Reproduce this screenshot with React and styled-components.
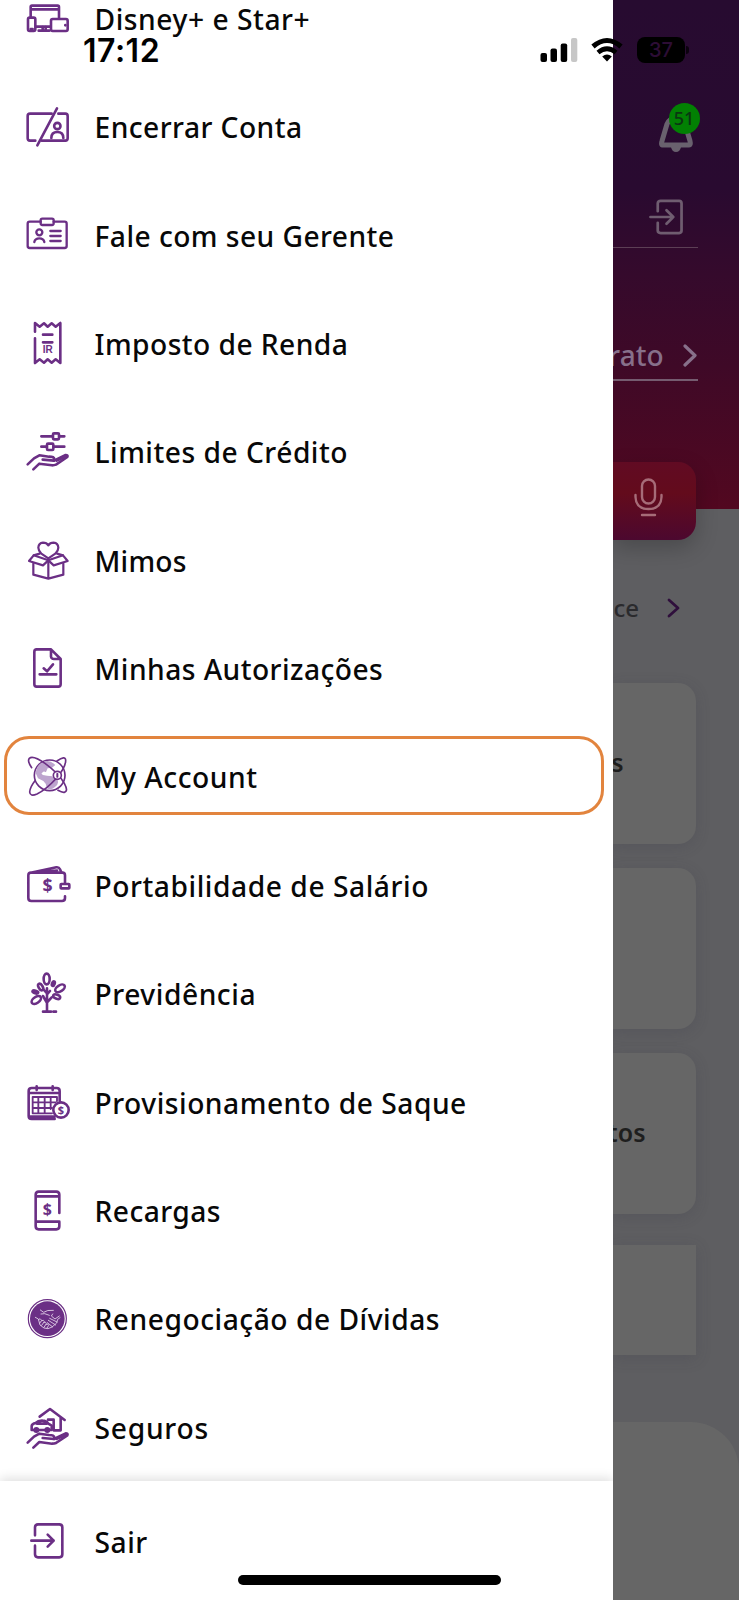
import React from 'react'
import styled, { createGlobalStyle, css } from 'styled-components'

const GlobalStyle = createGlobalStyle`
    *{
        box-sizing: border-box;
    }
    body{
        margin: 0;
        background: #5e5e61;
        font-family: "Noto Sans", "Open Sans", sans-serif;
    }
`
const Screen = styled.div`
    position: relative;
    display: grid;
    grid-template-columns: 613px 1fr;
    width: 739px;
    height: 1600px;
    overflow: hidden;
`

/* drawer */
const Drawer = styled.aside`
    display: flex;
    flex-direction: column;
    height: 1600px;
    background: #ffffff;
`
const Menu = styled.ul`
    flex: none;
    display: flex;
    flex-direction: column;
    height: 1481px;
    margin: 0;
    padding: 0;
    overflow: hidden;
    list-style: none;
`
const Item = styled.li`
    position: relative;
    flex: none;
    display: flex;
    align-items: center;
    gap: 22.5px;
    height: 108.35px;
    padding-left: 24px;
    &:first-of-type{
        margin-top: -35.1px;
    }
    ${({ $marked }) => $marked && css`
        &::after{
            content: "";
            position: absolute;
            left: 4px;
            right: 9px;
            top: 12.5px;
            height: 73px;
            border: 3px solid #e2843e;
            border-radius: 25px;
        }
    `}
`
const Label = styled.span`
    font-size: 28.2px;
    line-height: 36px;
    font-weight: 500;
    letter-spacing: ${({ $track }) => $track || 0}px;
    color: #080808;
    white-space: nowrap;
`
const Icon = styled.svg`
    flex: none;
    width: 48px;
    height: 48px;
    fill: none;
    stroke: #6b2f85;
    stroke-width: 7.8;
    stroke-linecap: round;
    stroke-linejoin: round;
    text{
        fill: #6b2f85;
        stroke: none;
        font-weight: 700;
        text-anchor: middle;
    }
`
const Footer = styled.footer`
    flex: 1;
    display: flex;
    align-items: center;
    gap: 22.5px;
    padding: 2px 0 0 24px;
    box-shadow: 0 -3px 10px rgba(0,0,0,0.12);
`

/* account page behind the drawer */
const Page = styled.main`
    display: flex;
    flex-direction: column;
    height: 1600px;
    overflow: hidden;
    background: #5e5e61;
`
const Hero = styled.header`
    flex: none;
    display: flex;
    flex-direction: column;
    height: 509px;
    background: linear-gradient(180deg, #270b30 0%, #290a30 37%, #350a2c 54%, #3f0927 72%, #520820 100%);
`
const HeroLine = styled.div`
    display: flex;
    justify-content: flex-end;
    align-items: flex-end;
    width: ${({ $w }) => $w}px;
    height: ${({ $h }) => $h}px;
    padding: 0 ${({ $right }) => $right || 0}px ${({ $bottom }) => $bottom || 0}px 0;
    border-bottom: ${({ $line }) => $line || '0 none'};
    overflow: ${({ $clip }) => ($clip ? 'hidden' : 'visible')};
`
const PageIcon = styled.svg`
    flex: none;
    fill: none;
    stroke: ${({ $color }) => $color || '#84727f'};
    stroke-linecap: round;
    stroke-linejoin: round;
`
const Bell = styled.div`
    position: relative;
    height: 38px;
`
const Badge = styled.span`
    position: absolute;
    top: -12.5px;
    left: 11px;
    width: 31px;
    height: 31px;
    border-radius: 50%;
    background: #028003;
    color: #0b3512;
    font-size: 18px;
    line-height: 31px;
    font-weight: 500;
    text-align: center;
`
const Statement = styled.span`
    margin-right: 19px;
    font-size: 28px;
    line-height: 36px;
    font-weight: 500;
    color: #87708a;
`
const Voice = styled.div`
    position: relative;
    flex: none;
    width: 82.5px;
    height: 78px;
    margin-top: -47px;
    padding: 16px 0 0 21px;
    border-radius: 0 18px 18px 0;
    background: linear-gradient(180deg, #610b23 0%, #630b1c 40%, #4c082f 100%);
    box-shadow: 0 8px 22px rgba(0,0,0,0.22);
`
const Shortcut = styled.div`
    flex: none;
    display: flex;
    align-items: center;
    justify-content: flex-end;
    gap: 28px;
    width: 67px;
    height: 40px;
    margin: 48px 0 55px;
    font-size: 24px;
    line-height: 30px;
    font-weight: 500;
    color: #2a2a2d;
`
const Card = styled.div`
    flex: none;
    display: flex;
    align-items: center;
    justify-content: flex-end;
    width: 82.5px;
    height: ${({ $h }) => $h}px;
    margin-bottom: ${({ $gap }) => $gap}px;
    padding: 0 ${({ $right }) => $right || 0}px 3px 0;
    border-radius: ${({ $square }) => ($square ? '0' : '0 18px 18px 0')};
    background: #666666;
    box-shadow: 0 3px 14px rgba(60,60,72,0.22);
    color: #1e1e1e;
    font-size: 25px;
    font-weight: 600;
    overflow: hidden;
`
const Sheet = styled.div`
    flex: 1;
    border-radius: 0 48px 0 0;
    background: #666666;
`

/* phone chrome, drawn over everything */
const StatusBar = styled.div`
    position: absolute;
    top: 33.5px;
    left: 83px;
    right: 50px;
    display: flex;
    align-items: center;
    height: 32px;
    font-family: Inter, sans-serif;
`
const Time = styled.time`
    flex: 1;
    padding-top: 2px;
    font-size: 32px;
    line-height: 32px;
    font-weight: 600;
    letter-spacing: 0.5px;
    color: #000000;
`
const Battery = styled.div`
    width: 48px;
    height: 26px;
    margin-left: 14px;
    border-radius: 8px;
    background: #000000;
    color: #2c0d35;
    font-size: 20px;
    line-height: 26px;
    font-weight: 500;
    text-align: center;
`
const BatteryTip = styled.span`
    width: 3px;
    height: 8px;
    margin-left: 1px;
    border-radius: 0 4px 4px 0;
    background: #0b020e;
`
const HomeBar = styled.div`
    position: absolute;
    left: 238px;
    bottom: 15.5px;
    width: 263px;
    height: 9.5px;
    border-radius: 5px;
    background: #000000;
`

const Hand = ({ y = 0 }) => (
    <g transform={`translate(0 ${y})`}>
        <path d="M11 109 L30 91 L46 82 L75 86 Q90 86 91 93 L90 98 L56 95" />
        <path d="M90 98 L125 81 Q133 81 130 87 L96 110 Q91 112 84 112 L46 107 L28 124" />
        <path d="M98 97 L124 86" strokeWidth="9" />
    </g>
)

const icons = {
    devices: (
        <>
            <path d="M20 66 V36 Q20 32 24 32 H101 Q105 32 105 36 V68 M21 43 H104 M37 95 H78" />
            <rect x="12" y="68" width="22" height="40" rx="5" />
            <rect x="81" y="72" width="50" height="36" rx="5" />
            <path d="M44 107 H76 M56 96 V106 M65 96 V106 M20 102 H26" />
            <path d="M124 90 V91" />
        </>
    ),
    closeAccount: (
        <>
            <path d="M83 32 H18 Q11 32 11 39 V106 Q11 113 18 113 H34 M53 113 H124 Q131 113 131 106 V39 Q131 32 124 32 H103" />
            <path d="M99 16 L40 127" />
            <circle cx="100" cy="69" r="9.5" />
            <path d="M82 105 Q82 87 100 87 Q118 87 118 105" />
        </>
    ),
    manager: (
        <g strokeWidth="7">
            <path d="M50 29 H17 Q11 29 11 35 V102 Q11 108 17 108 H122 Q128 108 128 102 V35 Q128 29 122 29 H89" />
            <rect x="50" y="20" width="39" height="19" rx="5" />
            <circle cx="46" cy="61" r="9" />
            <path d="M31 90 Q33 79 46 79 Q59 79 61 90 M79 57 H110 M79 72 H110 M79 87 H110" />
        </g>
    ),
    tax: (
        <>
            <path d="M33 35 V9 L47 20 L60 10 L71 20 L83 10 L95 20 L109 9 V129 L95 118 L83 128 L71 118 L60 128 L47 118 L33 129 V55" />
            <path d="M57 44 H85 M57 67 H85" />
            <text x="71" y="99" fontSize="30" style={{ fontFamily: 'Liberation Sans' }}>IR</text>
        </>
    ),
    limits: (
        <>
            <path d="M52 25 H86 M106 25 H121 M52 56 H68 M89 56 H121" />
            <rect x="87" y="16" width="18" height="18" rx="3" />
            <rect x="69" y="47" width="19" height="19" rx="3" />
            <Hand />
        </>
    ),
    gifts: (
        <g strokeWidth="6.6">
            <path d="M52 50 Q43 40 43 32 Q44 18 57 17 Q68 17 73 25 Q78 17 89 17 Q102 18 103 32 Q103 41 94 50 L73 64 Z" />
            <path d="M47 50 L29 55 L15 72 L57 85 L73 70 L89 85 L131 72 L117 55 L99 50" />
            <path d="M29 55 L73 70 L117 55" />
            <path d="M28 80 V113 L73 125 L118 113 V80 M73 71 V124" />
        </g>
    ),
    permits: (
        <>
            <path d="M80 13 H38 Q31 13 31 20 V118 Q31 125 38 125 H103 Q110 125 110 118 V42 L81 13 V35 Q82 42 90 42 H108" />
            <path d="M59 70 L69 79 L87 58 M47 88 H97" />
        </>
    ),
    account: (
        <g strokeWidth="5">
            <circle cx="77" cy="67" r="46" />
            <path d="M35 60 Q37 34 60 26 Q78 20 94 36 L84 44 L71 46 L66 57 L54 59 L56 66 L84 70 L99 80 Q108 90 92 103 Q80 113 69 106 L65 92 L58 84 L42 76 Z" fill="#bda4ce" stroke="none" />
            <path d="M52 62 L60 55 L68 61 L82 60 L80 68 L60 66 Z" fill="#ffffff" stroke="none" />
            <path d="M23 44 Q9 24 16 16 Q27 6 63 31 Q104 61 121 91 Q134 115 121 118 Q114 119 102 112" />
            <path d="M99 24 Q124 7 125 21 Q126 43 95 78 Q66 110 39 123 Q18 132 17 117 Q18 102 33 83" />
            <circle cx="100" cy="67" r="12" fill="#ffffff" />
            <rect x="97" y="60" width="6" height="14" rx="2" fill="#6b2f85" stroke="none" />
        </g>
    ),
    wallet: (
        <>
            <path d="M123 62 V40 Q123 32 115 32 H21 Q13 32 13 40 V108 Q13 117 22 117 H114 Q123 117 123 108 V103" />
            <path d="M27 31 L97 16 Q105 15 108 22 L112 31 M47 30 L99 26" />
            <rect x="110" y="66" width="26" height="13" rx="2" />
            <text x="71" y="91" fontSize="53">$</text>
        </>
    ),
    pension: (
        <>
            <path d="M69 55 V123 M57 125 H81 M88 125 H96 M68 97 L57 78 M70 96 L83 82 M69 70 L60 60 M69 73 L78 63" />
            <ellipse cx="68" cy="27" rx="9" ry="16" />
            <ellipse cx="108" cy="55" rx="16" ry="9" transform="rotate(-32 108 55)" />
            <ellipse cx="88" cy="41" rx="4" ry="7" transform="rotate(20 88 41)" fill="#6b2f85" />
            <ellipse cx="50" cy="51" rx="6" ry="11" transform="rotate(-30 50 51)" />
            <ellipse cx="34" cy="66" rx="9" ry="4" transform="rotate(15 34 66)" fill="#6b2f85" />
            <ellipse cx="37" cy="90" rx="16" ry="9" transform="rotate(-35 37 90)" />
            <ellipse cx="98" cy="80" rx="11" ry="6" transform="rotate(22 98 80)" />
        </>
    ),
    calendar: (
        <>
            <path d="M107 65 V36 Q107 27 98 27 H23 Q14 27 14 36 V111 Q14 120 23 120 H92 M15 42 H106 M38 22 V33 M86 22 V33" />
            <path d="M19 114 H90" strokeWidth="11" />
            <path d="M26 54 V103 H84 M26 54 H99 V66 M43 54 V102 M62 54 V102 M80 54 V90 M26 70 H95 M26 87 H84" strokeWidth="5.5" />
            <circle cx="111" cy="93" r="23" fill="#ffffff" />
            <text x="111" y="105" fontSize="33">$</text>
        </>
    ),
    topUp: (
        <>
            <path d="M106 78 V23 Q106 14 97 14 H44 Q35 14 35 23 V118 Q35 127 44 127 H97 Q106 127 106 118 V104 H36 M36 28 H105" />
            <text x="70" y="85" fontSize="48">$</text>
        </>
    ),
    deal: (
        <>
            <circle cx="70" cy="71" r="57" strokeWidth="3.5" />
            <circle cx="70" cy="71" r="52" fill="#6b2f85" stroke="none" />
            <g stroke="#dbc9e3" strokeWidth="2.8">
                <path d="M49 45 L59 52 Q69 44 88 46 M51 57 L62 56 L76 61 M86 57 L82 63 L93 72 L106 63" />
                <path d="M34 67 L43 72 L48 90 L60 99 L72 101 L84 96 L98 84 L101 73 L108 68" />
                <path d="M43 74 Q49 67 53 76 L47 85 M53 77 Q59 73 61 80 L53 91 M60 82 Q66 79 67 86 L60 97 M67 88 Q73 85 74 91 L69 99" />
                <path d="M73 76 L95 90 M70 83 L86 96 M77 70 L99 81" />
            </g>
        </>
    ),
    insurance: (
        <>
            <path d="M47 38 L78 15 L122 48 M110 42 V79 H89 V47 H72" />
            <path d="M23 78 V66 Q24 59 35 57 Q43 49 56 50 Q67 50 73 59 L83 65 V78 H23 Z M39 59 H68" />
            <circle cx="37" cy="78" r="5" fill="#6b2f85" />
            <circle cx="70" cy="78" r="5" fill="#6b2f85" />
            <Hand y={7} />
        </>
    ),
    exit: (
        <>
            <path d="M33 52 V28 Q33 19 42 19 H106 Q115 19 115 28 V109 Q115 118 106 118 H42 Q33 118 33 109 V83" />
            <path d="M22 68 H89 M71 50 L89 68 L71 86" />
        </>
    ),
}

const items = [
    { icon: 'devices', text: 'Disney+ e Star+', track: 0.55 },
    { icon: 'closeAccount', text: 'Encerrar Conta', track: 0.45 },
    { icon: 'manager', text: 'Fale com seu Gerente', track: 0.45 },
    { icon: 'tax', text: 'Imposto de Renda', track: 0.45 },
    { icon: 'limits', text: 'Limites de Crédito', track: 0.5 },
    { icon: 'gifts', text: 'Mimos', track: 0.2 },
    { icon: 'permits', text: 'Minhas Autorizações', track: 0.45 },
    { icon: 'account', text: 'My Account', track: 0.55, marked: true },
    { icon: 'wallet', text: 'Portabilidade de Salário', track: 0.55 },
    { icon: 'pension', text: 'Previdência', track: 0.55 },
    { icon: 'calendar', text: 'Provisionamento de Saque', track: 0.52 },
    { icon: 'topUp', text: 'Recargas', track: 0.45 },
    { icon: 'deal', text: 'Renegociação de Dívidas', track: 0.52 },
    { icon: 'insurance', text: 'Seguros', track: 0.75 },
]

const SideMenu = () => {
    return (
        <Drawer>
            <Menu>
                {items.map(({ icon, text, track, marked }) => (
                    <Item key={icon} $marked={marked}>
                        <Icon viewBox="0 0 144 144">{icons[icon]}</Icon>
                        <Label $track={track}>{text}</Label>
                    </Item>
                ))}
            </Menu>
            <Footer>
                <Icon viewBox="0 0 144 144">{icons.exit}</Icon>
                <Label $track={0.5}>Sair</Label>
            </Footer>
        </Drawer>
    )
}

const AccountPage = () => {
    return (
        <Page>
            <Hero>
                <HeroLine $w={80.5} $h={153}>
                    <Bell>
                        <PageIcon width="36" height="38" viewBox="0 0 36 38" strokeWidth="5" $color="#69616e">
                            <path d="M4 30 Q3 29 4 26 L9 9 Q12 3 18 3 Q24 3 27 9 L32 26 Q33 30 31 30 Z" />
                            <path d="M13 32 Q14 37 18 37 Q22 37 23 32 Z" fill="#69616e" stroke="none" />
                        </PageIcon>
                        <Badge>51</Badge>
                    </Bell>
                </HeroLine>
                <HeroLine $w={85} $h={95} $right={15} $bottom={12} $line="1.5px solid #5c3f55">
                    <PageIcon width="34" height="36" viewBox="0 0 35 36" strokeWidth="2.8" $color="#6f5d70">
                        <path d="M9 12 V4 Q9 1.5 12 1.5 H31 Q33.5 1.5 33.5 4 V32 Q33.5 34.5 31 34.5 H12 Q9 34.5 9 32 V24" />
                        <path d="M1.5 18 H25 M18 11 L25 18 L18 25" />
                    </PageIcon>
                </HeroLine>
                <HeroLine $w={84.5} $h={133} $right={1} $bottom={6} $line="2px solid #755c70" $clip>
                    <Statement>Extrato</Statement>
                    <PageIcon width="14" height="30" viewBox="0 0 14 30" strokeWidth="3.2" $color="#87708a">
                        <path d="M2 3 L12 12.5 L2 22" />
                    </PageIcon>
                </HeroLine>
            </Hero>
            <Voice>
                <PageIcon width="29" height="40" viewBox="0 0 29 40" strokeWidth="2.4" $color="#a66c78">
                    <rect x="8" y="1.5" width="13" height="24" rx="6.5" />
                    <path d="M1.5 17 V19 Q2 31 14.5 31 Q27 31 27.5 19 V17 M8 37 H21" />
                </PageIcon>
            </Voice>
            <Shortcut>
                ce
                <PageIcon width="13" height="20" viewBox="0 0 13 20" strokeWidth="2.8" $color="#2f0f3c">
                    <path d="M2 2 L11 10 L2 18" />
                </PageIcon>
            </Shortcut>
            <Card $h={160.5} $gap={24} $right={72}>s</Card>
            <Card $h={161} $gap={24} />
            <Card $h={161} $gap={31.5} $right={50}>tos</Card>
            <Card $h={110} $gap={67} $square />
            <Sheet />
        </Page>
    )
}

const Status = () => {
    return (
        <StatusBar>
            <Time>17:12</Time>
            <svg width="38" height="26" viewBox="0 0 38 26">
                <rect x="0.5" y="16" width="6.5" height="9" rx="2" />
                <rect x="10.5" y="11.5" width="6.5" height="13.5" rx="2" />
                <rect x="20.7" y="6.5" width="6.5" height="18.5" rx="2" />
                <rect x="31" y="1" width="6.3" height="24" rx="2" fill="#c7c7c7" />
            </svg>
            <svg width="32" height="26" viewBox="0 0 32 26" style={{ marginLeft: 13 }}>
                <path d="M2 9.5 Q16 -2.5 30 9.5" fill="none" stroke="#000" strokeWidth="5" />
                <path d="M7 15.5 Q16 8 25 15.5" fill="none" stroke="#000" strokeWidth="4.6" />
                <path d="M11.2 19.5 Q16 15.5 20.8 19.5 L16 24.5 Z" />
            </svg>
            <Battery>37</Battery>
            <BatteryTip />
        </StatusBar>
    )
}

const App = () => {
    return (
        <Screen>
            <GlobalStyle />
            <SideMenu />
            <AccountPage />
            <Status />
            <HomeBar />
        </Screen>
    )
}

export default App
